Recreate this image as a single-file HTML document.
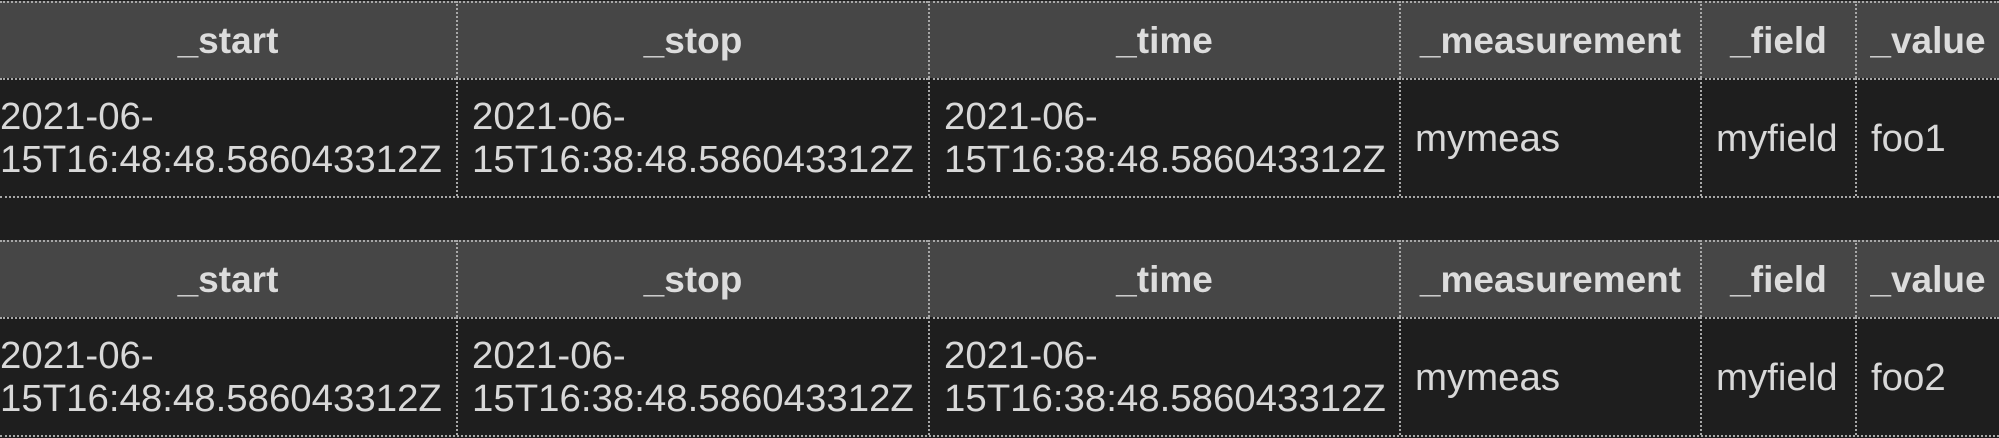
<!DOCTYPE html>
<html><head><style>
html,body{margin:0;padding:0;background:#1e1e1e;width:1999px;height:438px;overflow:hidden}
body{position:relative;font-family:"Liberation Sans",sans-serif;color:#d8d8d8}
.c{position:absolute;box-sizing:border-box;border-left:2px dotted #a8a8a8;border-top:2px dotted #a8a8a8;display:flex;align-items:center;font-size:38.4px;line-height:43px;padding-left:14px;white-space:nowrap}
.h{background:#464646;font-weight:bold;justify-content:center;padding-left:0;color:#dcdcdc;font-size:37px}
.line{position:absolute;left:0;width:1999px;border-top:2px dotted #a8a8a8}
</style></head><body>
<div id="t"></div>
<script>
const xs=[0,456,928,1399,1700,1855,1999];
const heads=["_start","_stop","_time","_measurement","_field","_value"];
function tbl(y0,val){
 const rows=[[y0,y0+77,true],[y0+77,y0+195,false]];
 let h='';
 rows.forEach(([a,b,hd])=>{
  for(let i=0;i<6;i++){
   let txt;
   if(hd)txt=heads[i];
   else txt=[ "2021-06-<br>15T16:48:48.586043312Z","2021-06-<br>15T16:38:48.586043312Z","2021-06-<br>15T16:38:48.586043312Z","mymeas","myfield",val][i];
   const pad=(!hd&&i==0)?'padding-left:0;':'';
   h+=`<div class="c${hd?' h':''}" style="left:${xs[i]}px;top:${a}px;width:${xs[i+1]-xs[i]}px;height:${b-a}px;${pad}${i==0?'border-left:none;':''}"><span>${txt}</span></div>`;
  }
 });
 h+=`<div class="line" style="top:${y0+195}px"></div>`;
 return h;
}
document.getElementById('t').innerHTML=tbl(1,'foo1')+tbl(240,'foo2');
</script>
</body></html>
